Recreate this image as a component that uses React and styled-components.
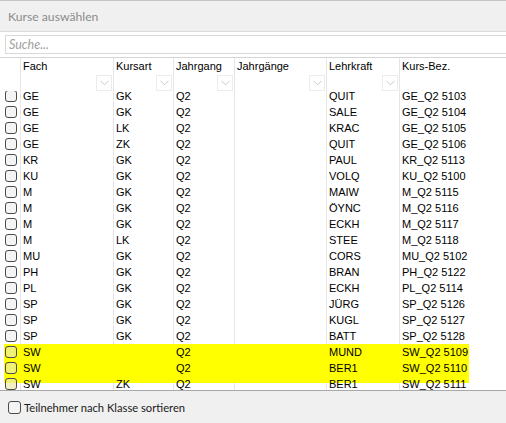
import React from "react";
import styled, { createGlobalStyle } from "styled-components";

const GlobalStyle = createGlobalStyle`
  html, body {
    margin: 0;
    padding: 0;
    background: #f0f0f0;
  }
`;

const COLS = "16px 93px 60px 61px 92px 73px 70px 1fr";
const YELLOW = "#ffff00";
const LINE = "#e6e6e6";

const Window = styled.div`
  width: 506px;
  height: 423px;
  display: flex;
  flex-direction: column;
  background: #f0f0f0;
  overflow: hidden;
  font-family: "Liberation Sans", Arial, sans-serif;
`;

const TopStrip = styled.div`
  height: 1px;
  background: #c4c4c4;
`;

const TitleBar = styled.div`
  height: 30px;
  display: flex;
  align-items: center;
  padding-left: 8px;
  font-family: Lato, "Open Sans", sans-serif;
  font-size: 12.2px;
  color: #8c8c8c;
  border-bottom: 1px solid #dadada;
`;

const Panel = styled.div`
  flex: 1;
  display: flex;
  flex-direction: column;
  background: #fff;
  border-bottom: 1px solid #a8a8a8;
  min-height: 0;
`;

const SearchRow = styled.div`
  padding: 3px 0 0 5px;
  height: 22px;
  border-bottom: 1px solid #d4d4d4;
`;

const SearchBox = styled.input`
  box-sizing: border-box;
  width: 520px;
  height: 19px;
  border: 1px solid #d9d9d9;
  padding: 0 3px;
  font-family: Lato, "Open Sans", sans-serif;
  font-style: italic;
  font-size: 12.5px;
  outline: none;
  &::placeholder {
    color: #a0a0a0;
  }
`;

const HeaderRow = styled.div`
  display: grid;
  grid-template-columns: ${COLS};
  height: 33px;
  padding-left: 4px;
`;

const HeaderCell = styled.div`
  position: relative;
  border-left: ${(p) => (p.$first ? "none" : `1px solid ${LINE}`)};
  padding: 2px 0 0 2px;
  font-size: 11px;
  color: #000;
`;

const FilterButton = styled.div`
  position: absolute;
  right: 1px;
  bottom: 0;
  width: 14px;
  height: 14px;
  border: 1px solid #ececec;
  display: flex;
  align-items: center;
  justify-content: center;
`;

const Body = styled.div`
  flex: 1;
  overflow: hidden;
  padding-left: 4px;
  min-height: 0;
`;

const Rows = styled.div`
  margin-top: -3px;
`;

const Row = styled.div`
  display: grid;
  grid-template-columns: ${COLS};
  height: 16px;
  background: #fff;
`;

const cellBackground = (mark, line) => {
  const sep = line
    ? `linear-gradient(${LINE}, ${LINE}) left / 1px 100% no-repeat, `
    : "";
  if (mark === "full") return YELLOW;
  if (mark === "part")
    return `linear-gradient(${YELLOW}, ${YELLOW}) top / 100% 7px no-repeat, ${sep}#fff`;
  return `${sep}#fff`;
};

const Cell = styled.div`
  background: ${(p) => cellBackground(p.$mark, p.$line)};
  padding-left: 3px;
  font-size: 11px;
  line-height: 16px;
  color: #000;
  white-space: nowrap;
  overflow: hidden;
`;

const CheckCell = styled.div`
  display: flex;
  align-items: center;
  padding-left: 1px;
  background: ${(p) => cellBackground(p.$mark, false)};
`;

const Box = styled.span`
  box-sizing: border-box;
  width: ${(p) => p.$size || 12}px;
  height: ${(p) => p.$size || 12}px;
  border: 1px solid #4a4a4a;
  border-radius: 3px;
  background: ${(p) => (p.$tint ? "rgba(235,235,170,0.7)" : "#f4f4f4")};
`;

const Footer = styled.div`
  height: 32px;
  display: flex;
  align-items: center;
  gap: 3px;
  padding-left: 8px;
  font-family: Lato, "Open Sans", sans-serif;
  font-size: 11.2px;
  color: #1a1a1a;
`;

const Chevron = () => (
  <svg width="9" height="6" viewBox="0 0 9 6">
    <path d="M0.5 0.8 L4.5 4.8 L8.5 0.8" fill="none" stroke="#c8c8c8" strokeWidth="1" />
  </svg>
);

const headers = [
  { label: "Fach", filter: true },
  { label: "Kursart", filter: true },
  { label: "Jahrgang", filter: true },
  { label: "Jahrgänge", filter: true },
  { label: "Lehrkraft", filter: true },
  { label: "Kurs-Bez.", filter: false },
];

const rows = [
  ["GE", "GK", "Q2", "", "QUIT", "GE_Q2 5103"],
  ["GE", "GK", "Q2", "", "SALE", "GE_Q2 5104"],
  ["GE", "LK", "Q2", "", "KRAC", "GE_Q2 5105"],
  ["GE", "ZK", "Q2", "", "QUIT", "GE_Q2 5106"],
  ["KR", "GK", "Q2", "", "PAUL", "KR_Q2 5113"],
  ["KU", "GK", "Q2", "", "VOLQ", "KU_Q2 5100"],
  ["M", "GK", "Q2", "", "MAIW", "M_Q2 5115"],
  ["M", "GK", "Q2", "", "ÖYNC", "M_Q2 5116"],
  ["M", "GK", "Q2", "", "ECKH", "M_Q2 5117"],
  ["M", "LK", "Q2", "", "STEE", "M_Q2 5118"],
  ["MU", "GK", "Q2", "", "CORS", "MU_Q2 5102"],
  ["PH", "GK", "Q2", "", "BRAN", "PH_Q2 5122"],
  ["PL", "GK", "Q2", "", "ECKH", "PL_Q2 5114"],
  ["SP", "GK", "Q2", "", "JÜRG", "SP_Q2 5126"],
  ["SP", "GK", "Q2", "", "KUGL", "SP_Q2 5127"],
  ["SP", "GK", "Q2", "", "BATT", "SP_Q2 5128"],
  ["SW", "", "Q2", "", "MUND", "SW_Q2 5109", "full"],
  ["SW", "", "Q2", "", "BER1", "SW_Q2 5110", "full"],
  ["SW", "ZK", "Q2", "", "BER1", "SW_Q2 5111", "part"],
];

export default function App() {
  return (
    <>
      <GlobalStyle />
      <Window>
        <TopStrip />
        <TitleBar>Kurse auswählen</TitleBar>
        <Panel>
          <SearchRow>
            <SearchBox placeholder="Suche..." />
          </SearchRow>
          <HeaderRow>
            <HeaderCell $first />
            {headers.map((h) => (
              <HeaderCell key={h.label}>
                {h.label}
                {h.filter && (
                  <FilterButton>
                    <Chevron />
                  </FilterButton>
                )}
              </HeaderCell>
            ))}
            <HeaderCell $first />
          </HeaderRow>
          <Body>
            <Rows>
              {rows.map((r, i) => (
                <Row key={i}>
                  <CheckCell $mark={r[6]}>
                    <Box $tint={!!r[6]} />
                  </CheckCell>
                  {r.slice(0, 6).map((c, j) => (
                    <Cell key={j} $line $mark={r[6]}>
                      {c}
                    </Cell>
                  ))}
                  <Cell />
                </Row>
              ))}
            </Rows>
          </Body>
        </Panel>
        <Footer>
          <Box $size={13} />
          Teilnehmer nach Klasse sortieren
        </Footer>
      </Window>
    </>
  );
}
